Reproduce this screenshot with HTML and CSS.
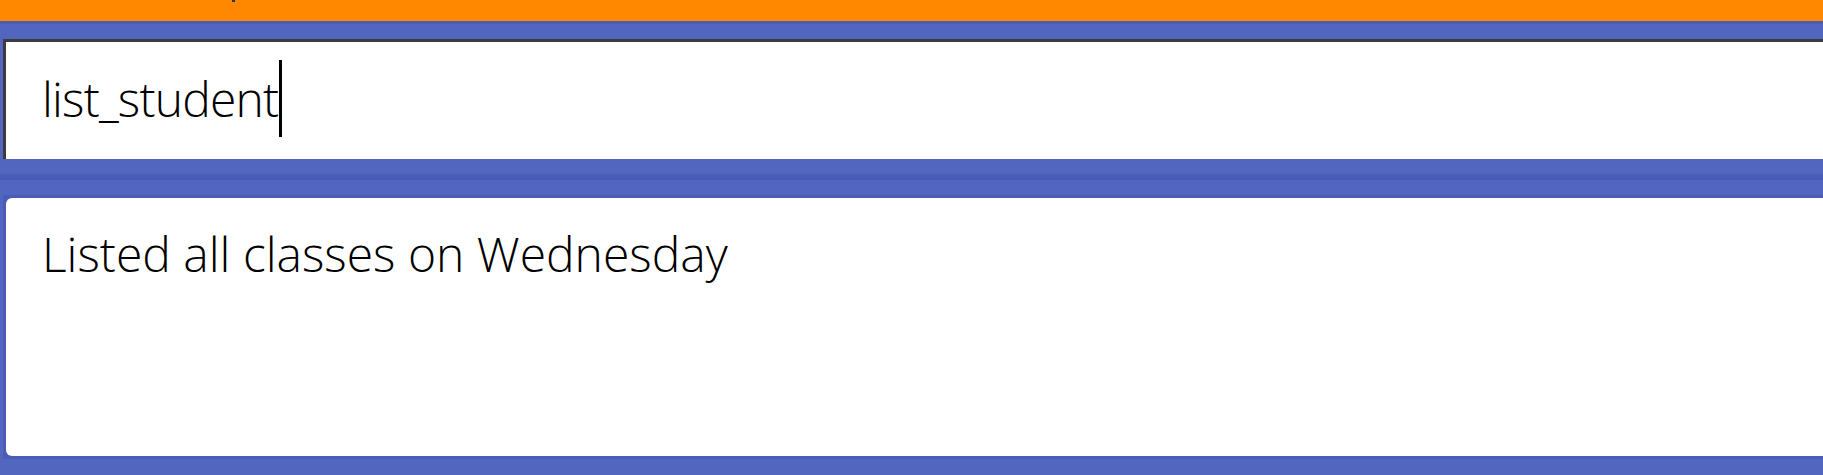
FILE: index.html
```html
<!DOCTYPE html>
<html>
<head>
<meta charset="utf-8">
<link rel="stylesheet" href="styles.css">
</head>
<body>
<div class="app">
  <div class="menubar"><span class="menu-cut"></span></div>
  <div class="gap-top"></div>
  <div class="command-box">
    <div class="command-text">list_student<span class="caret"></span></div>
  </div>
  <div class="gap-mid"></div>
  <div class="result-frame">
    <div class="result-box">
      <div class="result-text">Listed all classes on Wednesday</div>
    </div>
  </div>
</div>
</body>
</html>
```
FILE: styles.css
```css
html, body {
  margin: 0;
  padding: 0;
  height: 100%;
  overflow: hidden;
}
body {
  background: #5265bf;
  font-family: "Open Sans", "Noto Sans", sans-serif;
  font-weight: 300;
}
.app {
  display: flex;
  flex-direction: column;
  height: 475px;
}
.menubar {
  height: 21px;
  background: #ff8800;
  position: relative;
  overflow: hidden;
}
.menu-cut {
  position: absolute;
  left: 232px;
  top: 0;
  width: 3px;
  height: 2px;
  background: #333;
}
.gap-top {
  height: 18px;
  border-top: 3px solid #4a5cb8;
  box-sizing: border-box;
}
.command-box {
  margin-left: 3px;
  height: 120px;
  box-sizing: border-box;
  background: #fff;
  border-top: 3px solid #3c3c3c;
  border-left: 3px solid #3c3c3c;
  display: flex;
  align-items: flex-start;
  padding-left: 36px;
}
.command-text {
  font-size: 48px;
  color: #000;
  line-height: 1;
  margin-top: 18px;
  letter-spacing: -0.8px;
  display: flex;
  align-items: center;
}
.caret {
  display: inline-block;
  width: 3px;
  height: 77px;
  background: #000;
  margin-left: 1px;
}
.gap-mid {
  height: 36px;
  box-sizing: border-box;
  border-top: 15px solid #5265bf;
  border-bottom: 15px solid #5265bf;
  background: #4a5cb8;
}
.result-frame {
  margin-left: 3px;
  background: #4a5cb8;
  padding: 3px 0 3px 3px;
  height: 264px;
  box-sizing: border-box;
}
.result-box {
  background: #fff;
  height: 100%;
  border-radius: 6px 0 0 6px;
  padding-left: 36px;
  box-sizing: border-box;
}
.result-text {
  font-size: 48px;
  line-height: 1;
  padding-top: 32px;
  color: #000;
}
```
